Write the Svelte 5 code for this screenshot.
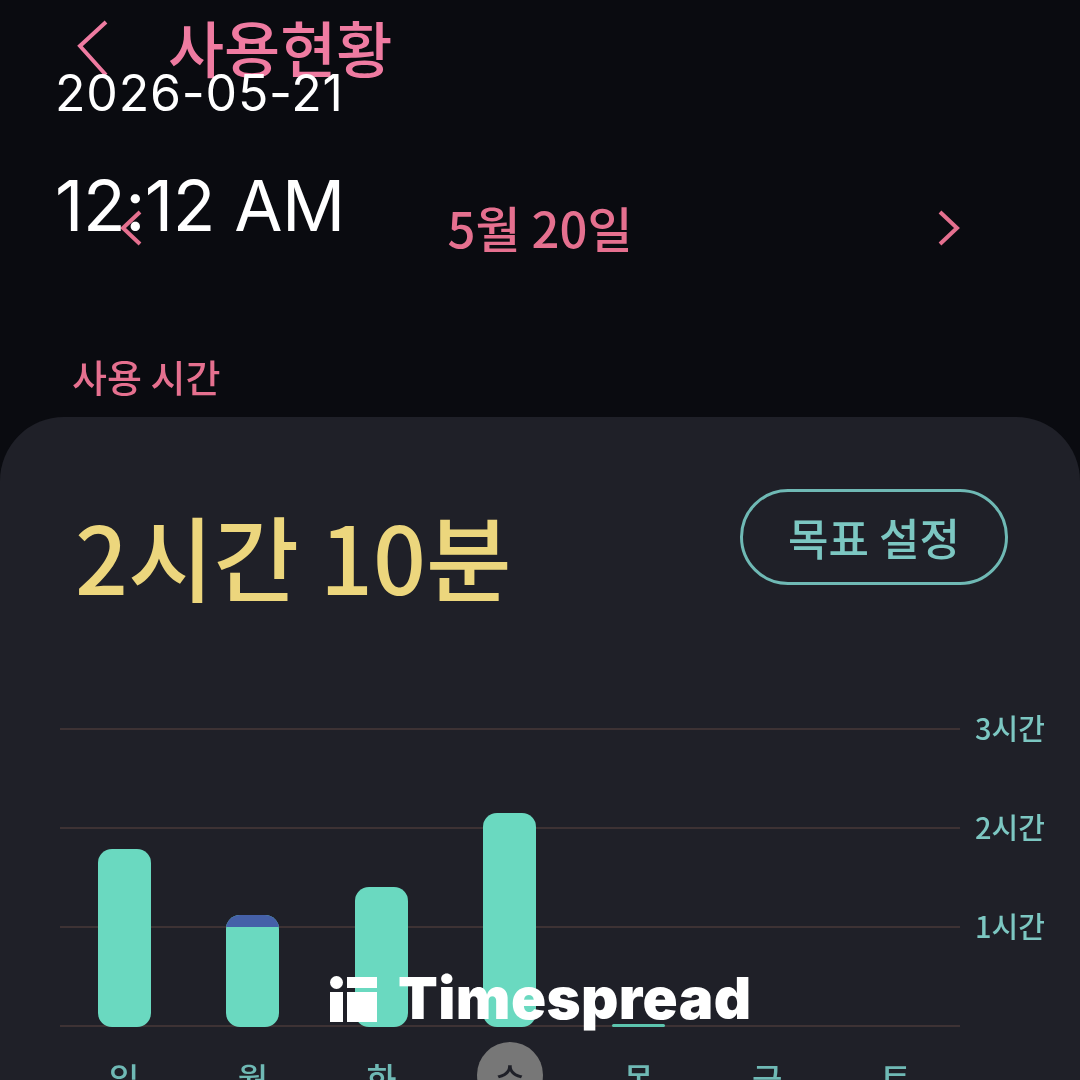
<script>
	const bars = [
		{ day: '일', height: 178 },
		{ day: '월', height: 100, extra: 12 },
		{ day: '화', height: 140 },
		{ day: '수', height: 214, today: true },
		{ day: '목', height: 3 },
		{ day: '금', height: 0 },
		{ day: '토', height: 0 }
	];
	const ticks = ['3시간', '2시간', '1시간', ''];
</script>

<div class="screen">
	<div class="content">
		<header class="topbar">
			<svg class="back" width="32" height="60" viewBox="0 0 32 60" fill="none" stroke="currentColor" stroke-width="4">
				<polyline points="29,3 3,27 29,56" />
			</svg>
			<h1>사용현황</h1>
		</header>

		<nav class="datenav">
			<svg width="22" height="36" viewBox="0 0 22 36" fill="none" stroke="currentColor" stroke-width="4">
				<polyline points="20,2 3,18 20,34" />
			</svg>
			<span class="date">5월 20일</span>
			<svg width="22" height="36" viewBox="0 0 22 36" fill="none" stroke="currentColor" stroke-width="4">
				<polyline points="2,2 19,18 2,34" />
			</svg>
		</nav>

		<div class="section-label">사용 시간</div>

		<section class="card">
			<div class="summary">
				<div class="total">2시간 10분</div>
				<button class="goal">목표 설정</button>
			</div>

			<div class="chart">
				<div class="plot">
					<div class="grid">
						{#each ticks as tick}
							<div class="gridrow">
								<div class="line"></div>
								<span class="tick">{tick}</span>
							</div>
						{/each}
					</div>
					<div class="bars">
						{#each bars as bar}
							<div class="barcol">
								{#if bar.height}
									<div class="bar" class:thin={bar.height < 10} style="height: {bar.height + (bar.extra || 0)}px">
										{#if bar.extra}
											<div class="bar-extra" style="height: {bar.extra}px"></div>
										{/if}
									</div>
								{/if}
							</div>
						{/each}
					</div>
				</div>
				<div class="days">
					{#each bars as bar}
						<div class="day" class:today={bar.today}><span>{bar.day}</span></div>
					{/each}
				</div>
			</div>
		</section>
	</div>

	<div class="stamp">
		<div class="stamp-date">2026-05-21</div>
		<div class="stamp-time">12:12 AM</div>
	</div>

	<div class="brand">
		<svg width="47" height="46" viewBox="0 0 47 46" fill="#fff">
			<circle cx="6.5" cy="6.5" r="6.5" />
			<rect x="0" y="16" width="13" height="30" />
			<rect x="17" y="1" width="30" height="11" />
			<rect x="17" y="16" width="30" height="30" />
		</svg>
		<span>Timespread</span>
	</div>
</div>

<style>
	:global(body) {
		margin: 0;
		background: #0a0b10;
	}

	.screen {
		position: relative;
		width: 1080px;
		height: 1080px;
		overflow: hidden;
		background: #0a0b10;
		font-family: 'Noto Sans CJK KR', 'Noto Sans', sans-serif;
	}

	.content {
		height: 1080px;
		filter: blur(0.6px);
	}

	.topbar {
		display: flex;
		align-items: center;
		gap: 59px;
		height: 60px;
		padding: 19px 0 0 77px;
		color: #ef7ba1;
	}

	h1 {
		margin: 0;
		padding-bottom: 4px;
		font-size: 61px;
		line-height: 60px;
		font-weight: 500;
		white-space: nowrap;
	}

	.datenav {
		display: flex;
		align-items: center;
		justify-content: space-between;
		height: 60px;
		margin-top: 119px;
		padding: 0 120px;
		color: #e5708f;
	}

	.date {
		padding-bottom: 3px;
		font-size: 49px;
		line-height: 57px;
		font-weight: 500;
	}

	.section-label {
		height: 50px;
		margin-top: 93px;
		padding-left: 72px;
		font-size: 38px;
		line-height: 50px;
		font-weight: 500;
		color: #e5708f;
	}

	.card {
		box-sizing: border-box;
		height: 663px;
		margin-top: 16px;
		padding: 72px 60px 0;
		background: #1f2028;
		border-radius: 64px 64px 0 0;
	}

	.summary {
		display: flex;
		align-items: flex-start;
		justify-content: space-between;
		padding: 0 12px 0 15px;
	}

	.total {
		margin-top: 16px;
		font-size: 93px;
		line-height: 100px;
		font-weight: 500;
		white-space: nowrap;
		color: #ecd67d;
	}

	.goal {
		box-sizing: border-box;
		width: 268px;
		height: 96px;
		background: none;
		border: 3px solid #6fb9b5;
		border-radius: 48px;
		font-family: inherit;
		font-size: 44px;
		font-weight: 500;
		color: #7cc7c2;
	}

	.chart {
		margin-top: 122px;
		width: 990px;
	}

	.plot {
		position: relative;
		height: 300px;
	}

	.grid {
		display: flex;
		flex-direction: column;
		height: 100%;
		justify-content: space-between;
	}

	.gridrow {
		display: flex;
		align-items: center;
		height: 3px;
	}

	.line {
		width: 900px;
		height: 2px;
		background: #3d3234;
		flex: none;
	}

	.tick {
		margin-left: 15px;
		padding-bottom: 4px;
		font-size: 29px;
		font-weight: 500;
		white-space: nowrap;
		color: #7cc7c2;
	}

	.bars {
		position: absolute;
		left: 0;
		bottom: 0;
		width: 900px;
		height: 100%;
		display: grid;
		grid-template-columns: repeat(7, 1fr);
		align-items: end;
	}

	.barcol {
		display: flex;
		justify-content: center;
	}

	.bar {
		position: relative;
		width: 53px;
		border-radius: 14px;
		overflow: hidden;
		background: #6ad9c0;
	}

	.bar.thin {
		border-radius: 2px;
		background: #5cc4ae;
	}

	.bar-extra {
		background: #4560a8;
	}

	.days {
		display: grid;
		grid-template-columns: repeat(7, 1fr);
		width: 900px;
		margin-top: 15px;
	}

	.day {
		display: flex;
		justify-content: center;
		font-size: 33px;
		font-weight: 500;
		color: #6fb9b5;
	}

	.day span {
		width: 66px;
		height: 66px;
		line-height: 72px;
		text-align: center;
		border-radius: 50%;
	}

	.day.today span {
		background: #777777;
		color: #1f2028;
	}

	.stamp {
		position: absolute;
		top: 60px;
		left: 55px;
		color: #ffffff;
		font-family: Inter, sans-serif;
	}

	.stamp-date {
		font-size: 50px;
		line-height: 66px;
		letter-spacing: 0.8px;
	}

	.stamp-time {
		margin-top: 38px;
		font-size: 70px;
		line-height: 84px;
		letter-spacing: -0.5px;
	}

	.brand {
		position: absolute;
		left: 330px;
		top: 964px;
		display: flex;
		align-items: center;
		gap: 21px;
		color: #ffffff;
		font-family: Inter, sans-serif;
		font-size: 58px;
		line-height: 70px;
		font-weight: 900;
		letter-spacing: 0.4px;
	}

	.brand span {
		margin-top: -1px;
	}
</style>
